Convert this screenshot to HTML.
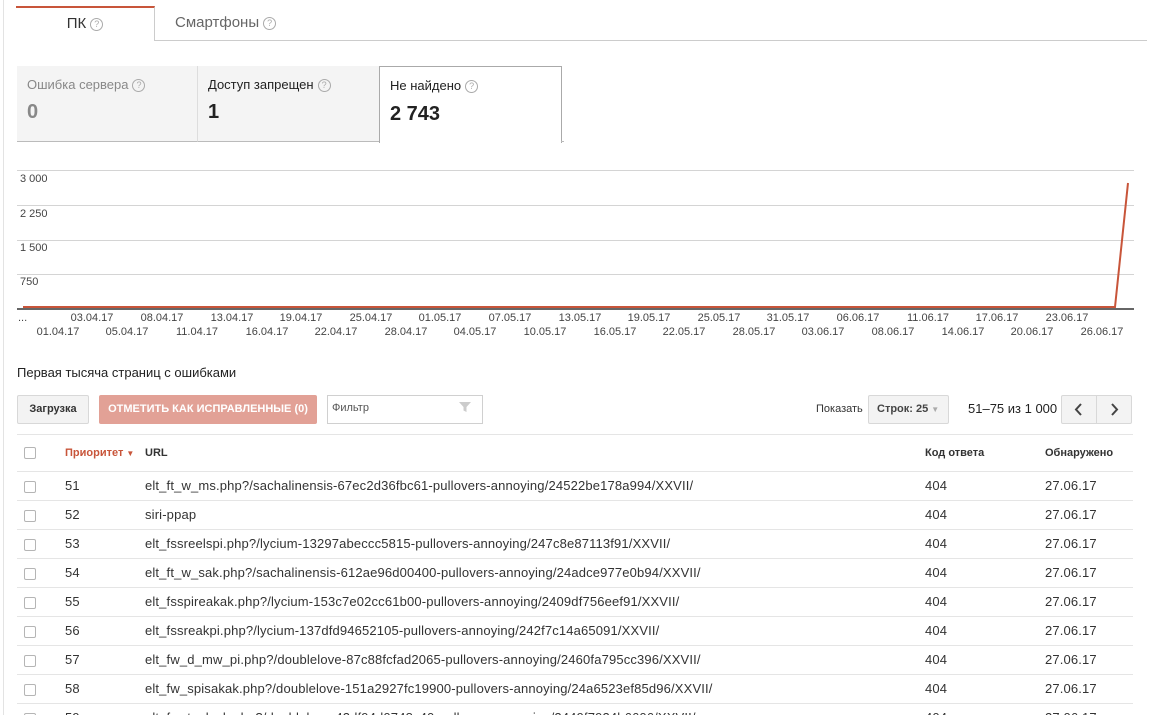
<!DOCTYPE html>
<html><head><meta charset="utf-8"><style>
*{margin:0;padding:0;box-sizing:border-box}
html,body{width:1159px;height:715px;overflow:hidden}
body{background:#fff;font-family:"Liberation Sans",Arial,sans-serif;color:#222;position:relative}
.a{position:absolute;white-space:nowrap}
.q{display:inline-block;width:13px;height:13px;border:1px solid #aaa;border-radius:50%;font-size:9px;line-height:11px;text-align:center;color:#aaa;vertical-align:1px;margin-left:4px}
.xl{position:absolute;font-size:11px;color:#444;transform:translateX(-50%)}
.row{position:absolute;left:17px;width:1116px;height:29px;border-top:1px solid #e5e5e5;font-size:13px;color:#333}
.row span{position:absolute;top:6px;letter-spacing:0.15px}
.cb{position:absolute;left:7px;top:9px;width:12px;height:12px;border:1px solid #b5b5b5;border-radius:2px;background:#fff}
</style></head><body>
<div class="a" style="left:3px;top:0;width:1px;height:715px;background:#e3e3e3"></div>
<div class="a" style="left:155px;top:40px;width:992px;height:1px;background:#ccc"></div>
<div class="a" style="left:16px;top:6px;width:139px;height:35px;border-top:2px solid #c8553a;border-right:1px solid #ccc;background:#fff;text-align:center;font-size:15px;line-height:32px;color:#333">ПК<span class="q">?</span></div>
<div class="a" style="left:175px;top:14px;font-size:15px;color:#666">Смартфоны<span class="q">?</span></div>
<div class="a" style="left:17px;top:66px;width:180px;height:76px;background:#f4f4f4;border-bottom:1px solid #bbb"></div>
<div class="a" style="left:197px;top:66px;width:182px;height:76px;background:#f4f4f4;border-left:1px solid #ddd;border-bottom:1px solid #bbb"></div>
<div class="a" style="left:379px;top:66px;width:183px;height:77px;background:#fff;border:1px solid #aaa;border-bottom:none"></div>
<div class="a" style="left:561px;top:141px;width:3px;height:1px;background:#bbb"></div>
<div class="a" style="left:27px;top:77px;font-size:13px;color:#888">Ошибка сервера<span class="q">?</span></div>
<div class="a" style="left:27px;top:101px;font-size:20px;font-weight:bold;color:#888">0</div>
<div class="a" style="left:208px;top:77px;font-size:13px;color:#222">Доступ запрещен<span class="q">?</span></div>
<div class="a" style="left:208px;top:101px;font-size:20px;font-weight:bold;color:#222">1</div>
<div class="a" style="left:390px;top:78px;font-size:13px;color:#222">Не найдено<span class="q">?</span></div>
<div class="a" style="left:390px;top:103px;font-size:20px;font-weight:bold;color:#222">2 743</div>
<svg class="a" style="left:0;top:160px" width="1159" height="160">
<g stroke="#d4d4d4" stroke-width="1"><line x1="17" y1="10.5" x2="1134" y2="10.5"/><line x1="17" y1="45.5" x2="1134" y2="45.5"/><line x1="17" y1="80.5" x2="1134" y2="80.5"/><line x1="17" y1="114.5" x2="1134" y2="114.5"/></g>
<line x1="17" y1="149" x2="1134" y2="149" stroke="#333" stroke-width="1.5"/>
<polyline points="23,147 1115,147 1128,23" fill="none" stroke="#c8553a" stroke-width="2"/>
</svg>
<div class="a" style="left:20px;top:173px;font-size:11px;color:#444">3 000</div>
<div class="a" style="left:20px;top:208px;font-size:11px;color:#444">2 250</div>
<div class="a" style="left:20px;top:242px;font-size:11px;color:#444">1 500</div>
<div class="a" style="left:20px;top:276px;font-size:11px;color:#444">750</div>
<div class="a" style="left:18px;top:312px;font-size:11px;color:#444">...</div>
<div class="xl" style="left:92px;top:312px">03.04.17</div><div class="xl" style="left:162px;top:312px">08.04.17</div><div class="xl" style="left:232px;top:312px">13.04.17</div><div class="xl" style="left:301px;top:312px">19.04.17</div><div class="xl" style="left:371px;top:312px">25.04.17</div><div class="xl" style="left:440px;top:312px">01.05.17</div><div class="xl" style="left:510px;top:312px">07.05.17</div><div class="xl" style="left:580px;top:312px">13.05.17</div><div class="xl" style="left:649px;top:312px">19.05.17</div><div class="xl" style="left:719px;top:312px">25.05.17</div><div class="xl" style="left:788px;top:312px">31.05.17</div><div class="xl" style="left:858px;top:312px">06.06.17</div><div class="xl" style="left:928px;top:312px">11.06.17</div><div class="xl" style="left:997px;top:312px">17.06.17</div><div class="xl" style="left:1067px;top:312px">23.06.17</div>
<div class="xl" style="left:58px;top:326px">01.04.17</div><div class="xl" style="left:127px;top:326px">05.04.17</div><div class="xl" style="left:197px;top:326px">11.04.17</div><div class="xl" style="left:267px;top:326px">16.04.17</div><div class="xl" style="left:336px;top:326px">22.04.17</div><div class="xl" style="left:406px;top:326px">28.04.17</div><div class="xl" style="left:475px;top:326px">04.05.17</div><div class="xl" style="left:545px;top:326px">10.05.17</div><div class="xl" style="left:615px;top:326px">16.05.17</div><div class="xl" style="left:684px;top:326px">22.05.17</div><div class="xl" style="left:754px;top:326px">28.05.17</div><div class="xl" style="left:823px;top:326px">03.06.17</div><div class="xl" style="left:893px;top:326px">08.06.17</div><div class="xl" style="left:963px;top:326px">14.06.17</div><div class="xl" style="left:1032px;top:326px">20.06.17</div><div class="xl" style="left:1102px;top:326px">26.06.17</div>
<div class="a" style="left:17px;top:365px;font-size:13px;color:#222">Первая тысяча страниц с ошибками</div>
<div class="a" style="left:17px;top:395px;width:72px;height:29px;background:#f3f3f3;border:1px solid #d8d8d8;border-radius:2px;font-size:11px;font-weight:bold;color:#333;text-align:center;line-height:27px">Загрузка</div>
<div class="a" style="left:99px;top:395px;width:218px;height:29px;background:#e2a196;border-radius:2px;font-size:11px;font-weight:bold;color:#fff;text-align:center;line-height:29px">ОТМЕТИТЬ КАК ИСПРАВЛЕННЫЕ (0)</div>
<div class="a" style="left:327px;top:395px;width:156px;height:29px;border:1px solid #d0d0d0;font-size:11px;color:#555;padding:6px 0 0 4px">Фильтр
<svg style="position:absolute;right:10px;top:5px" width="14" height="12"><path d="M1 1H13L8.5 6V11L5.5 9.5V6Z" fill="#ccc"/></svg></div>
<div class="a" style="left:816px;top:403px;font-size:11px;color:#333">Показать</div>
<div class="a" style="left:868px;top:395px;width:81px;height:29px;background:#f3f3f3;border:1px solid #d8d8d8;border-radius:2px;font-size:11px;font-weight:bold;color:#444;line-height:27px;padding-left:8px">Строк: 25 <span style="color:#aaa;font-size:8px;font-weight:normal">▼</span></div>
<div class="a" style="left:968px;top:401px;font-size:13px;color:#222">51–75 из 1 000</div>
<div class="a" style="left:1061px;top:395px;width:71px;height:29px;background:#f3f3f3;border:1px solid #d8d8d8;border-radius:2px"></div>
<div class="a" style="left:1096px;top:396px;width:1px;height:27px;background:#d8d8d8"></div>
<svg class="a" style="left:1061px;top:395px" width="71" height="29"><path d="M20 9L15 14.5L20 20M51 9L56 14.5L51 20" fill="none" stroke="#444" stroke-width="2"/></svg>
<div class="a" style="left:17px;top:434px;width:1116px;height:1px;background:#e5e5e5"></div>
<div class="cb" style="left:24px;top:447px;position:absolute"></div>
<div class="a" style="left:65px;top:447px;font-size:11px;font-weight:bold;color:#c8553a">Приоритет <span style="font-size:8px">▼</span></div>
<div class="a" style="left:145px;top:447px;font-size:11px;font-weight:bold;color:#333">URL</div>
<div class="a" style="left:925px;top:447px;font-size:11px;font-weight:bold;color:#333">Код ответа</div>
<div class="a" style="left:1045px;top:447px;font-size:11px;font-weight:bold;color:#333">Обнаружено</div>
<div class="row" style="top:471px"><div class="cb"></div><span style="left:48px">51</span><span style="left:128px">elt_ft_w_ms.php?/sachalinensis-67ec2d36fbc61-pullovers-annoying/24522be178a994/XXVII/</span><span style="left:908px">404</span><span style="left:1028px">27.06.17</span></div>
<div class="row" style="top:500px"><div class="cb"></div><span style="left:48px">52</span><span style="left:128px">siri-ppap</span><span style="left:908px">404</span><span style="left:1028px">27.06.17</span></div>
<div class="row" style="top:529px"><div class="cb"></div><span style="left:48px">53</span><span style="left:128px">elt_fssreelspi.php?/lycium-13297abeccc5815-pullovers-annoying/247c8e87113f91/XXVII/</span><span style="left:908px">404</span><span style="left:1028px">27.06.17</span></div>
<div class="row" style="top:558px"><div class="cb"></div><span style="left:48px">54</span><span style="left:128px">elt_ft_w_sak.php?/sachalinensis-612ae96d00400-pullovers-annoying/24adce977e0b94/XXVII/</span><span style="left:908px">404</span><span style="left:1028px">27.06.17</span></div>
<div class="row" style="top:587px"><div class="cb"></div><span style="left:48px">55</span><span style="left:128px">elt_fsspireakak.php?/lycium-153c7e02cc61b00-pullovers-annoying/2409df756eef91/XXVII/</span><span style="left:908px">404</span><span style="left:1028px">27.06.17</span></div>
<div class="row" style="top:616px"><div class="cb"></div><span style="left:48px">56</span><span style="left:128px">elt_fssreakpi.php?/lycium-137dfd94652105-pullovers-annoying/242f7c14a65091/XXVII/</span><span style="left:908px">404</span><span style="left:1028px">27.06.17</span></div>
<div class="row" style="top:645px"><div class="cb"></div><span style="left:48px">57</span><span style="left:128px">elt_fw_d_mw_pi.php?/doublelove-87c88fcfad2065-pullovers-annoying/2460fa795cc396/XXVII/</span><span style="left:908px">404</span><span style="left:1028px">27.06.17</span></div>
<div class="row" style="top:674px"><div class="cb"></div><span style="left:48px">58</span><span style="left:128px">elt_fw_spisakak.php?/doublelove-151a2927fc19900-pullovers-annoying/24a6523ef85d96/XXVII/</span><span style="left:908px">404</span><span style="left:1028px">27.06.17</span></div>
<div class="row" style="top:703px"><div class="cb"></div><span style="left:48px">59</span><span style="left:128px">elt_fw_t_alsak.php?/doublelove-42df94d0748c40-pullovers-annoying/2449f7924b6606/XXVII/</span><span style="left:908px">404</span><span style="left:1028px">27.06.17</span></div>
</body></html>
